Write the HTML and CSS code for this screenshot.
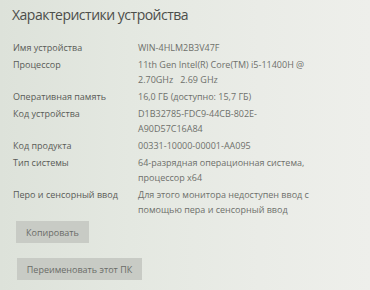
FILE: index.html
```html
<!DOCTYPE html>
<html lang="ru">
<head>
<meta charset="utf-8">
<title>Характеристики устройства</title>
<link rel="stylesheet" href="styles.css">
</head>
<body>
<main class="page">
  <h1 class="title">Характеристики устройства</h1>
  <dl class="specs">
    <dt>Имя устройства</dt>
    <dd>WIN-4HLM2B3V47F</dd>
    <dt>Процессор</dt>
    <dd>11th Gen Intel(R) Core(TM) i5-11400H @<br>2.70GHz&nbsp;&nbsp;&nbsp;2.69 GHz</dd>
    <dt>Оперативная память</dt>
    <dd>16,0 ГБ (доступно: 15,7 ГБ)</dd>
    <dt>Код устройства</dt>
    <dd>D1B32785-FDC9-44CB-802E-<br>A90D57C16A84</dd>
    <dt>Код продукта</dt>
    <dd>00331-10000-00001-AA095</dd>
    <dt>Тип системы</dt>
    <dd>64-разрядная операционная система,<br>процессор x64</dd>
    <dt>Перо и сенсорный ввод</dt>
    <dd>Для этого монитора недоступен ввод с<br>помощью пера и сенсорный ввод</dd>
  </dl>
  <div class="actions">
    <button class="btn btn-copy" type="button">Копировать</button>
    <button class="btn btn-rename" type="button">Переименовать этот ПК</button>
  </div>
</main>
</body>
</html>
```

FILE: styles.css
```css
html, body {
  margin: 0;
  padding: 0;
}
body {
  width: 370px;
  height: 290px;
  overflow: hidden;
  background: linear-gradient(90deg, #dde2da 0%, #e4e8e1 35%, #eaece7 70%, #eeefeb 100%);
  font-family: "Open Sans", "Noto Sans", sans-serif;
  color: #5a5c58;
}
.page {
  padding: 5px 0 0 12px;
}
.title {
  margin: 0;
  font-size: 14px;
  font-weight: 400;
  line-height: 20px;
  color: #4c4e4a;
  letter-spacing: -0.5px;
}
.specs {
  margin: 15px 0 0 1px;
  display: grid;
  grid-template-columns: 125px 1fr;
  row-gap: 2px;
  font-size: 9px;
  line-height: 15px;
}
.specs dt {
  margin: 0;
  color: #595b57;
}
.specs dd {
  margin: 0;
  color: #6e706b;
}
.actions {
  display: flex;
  flex-direction: column;
  align-items: flex-start;
  gap: 15px;
  margin: 4px 0 0 4px;
}
.btn {
  font-family: inherit;
  font-size: 9px;
  color: #6a6c68;
  background: #c8cbc5;
  border: 0;
  height: 22px;
  padding: 0;
  margin: 0;
}
.btn-copy {
  width: 73px;
}
.btn-rename {
  width: 125px;
  margin-left: 1px;
}
```
